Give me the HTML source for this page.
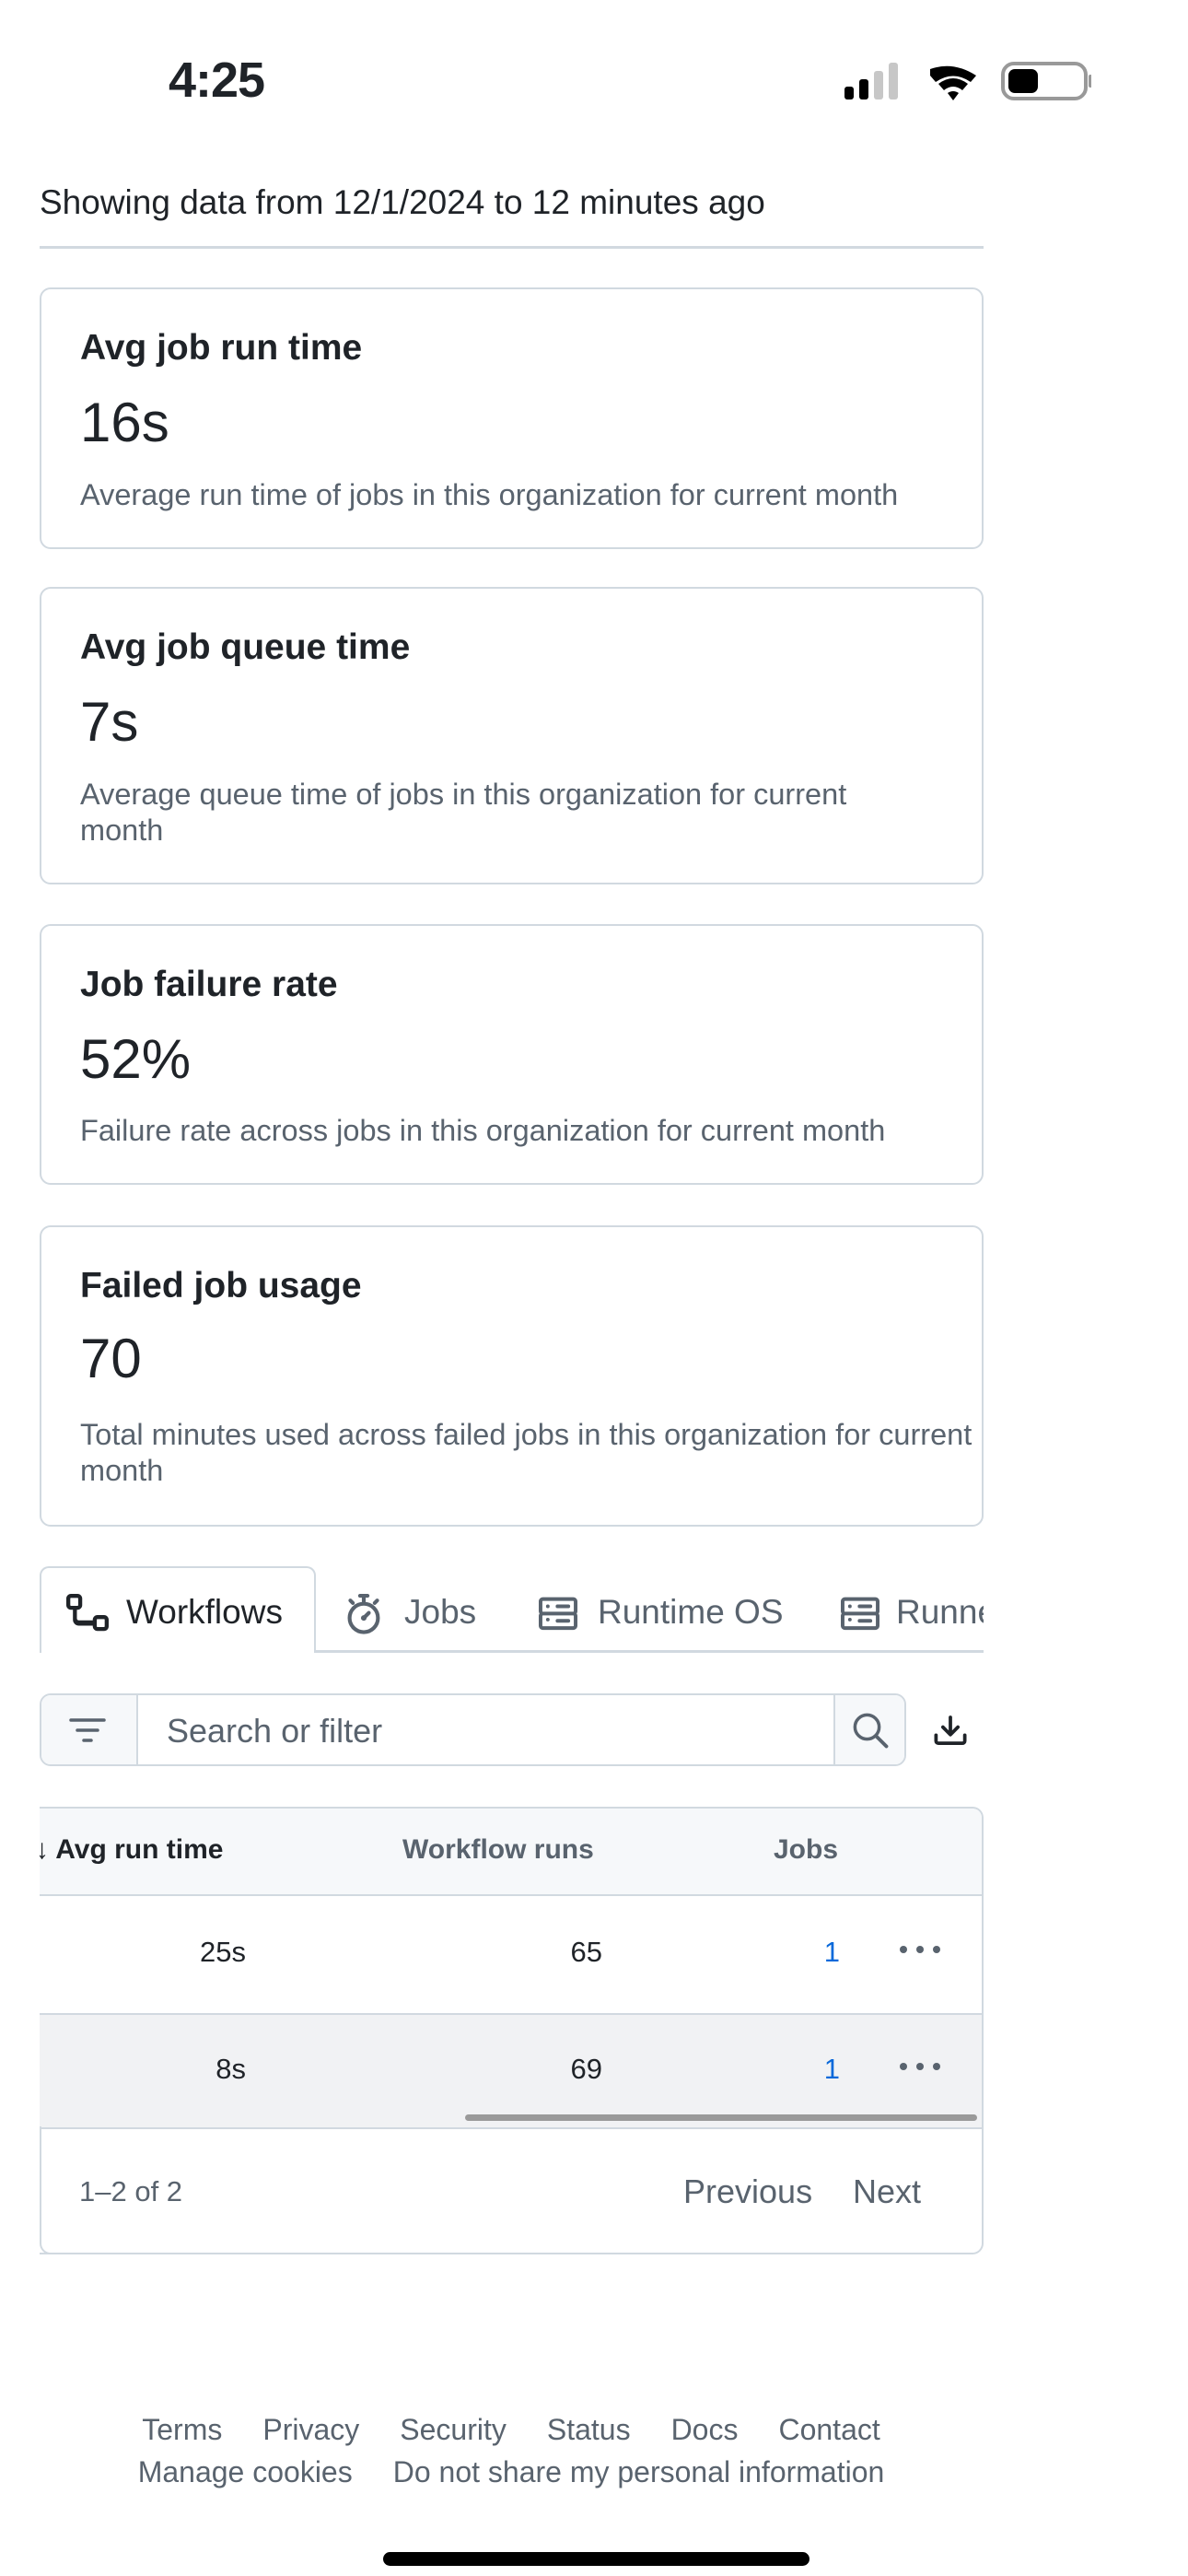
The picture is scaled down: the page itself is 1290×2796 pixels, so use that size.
<!DOCTYPE html>
<html><head><meta charset="utf-8"><style>
*{margin:0;padding:0;box-sizing:border-box}
body{width:1290px;height:2796px;background:#fff;font-family:"Liberation Sans",sans-serif;color:#1f2328;position:relative;overflow:hidden}
.a{position:absolute;white-space:nowrap}
.card{position:absolute;left:43px;width:1025px;border:2px solid #d1d9e0;border-radius:12px}
.t{position:absolute;left:42px;font-size:39px;font-weight:bold}
.v{position:absolute;left:42px;font-size:60px}
.d{position:absolute;left:42px;font-size:32.5px;color:#59636e;line-height:39px;width:970px;white-space:normal}
.g{color:#59636e}
</style></head><body>
<div class="a" style="left:183px;top:56px;font-size:54px;font-weight:bold;letter-spacing:-1px">4:25</div>
<svg class="a" style="left:915px;top:66px" width="270" height="44" viewBox="0 0 270 44">
<rect x="2" y="28" width="10" height="14" rx="3" fill="#000"/>
<rect x="18" y="20" width="10" height="22" rx="3" fill="#000"/>
<rect x="34" y="11" width="10" height="31" rx="3" fill="#c7c7c7"/>
<rect x="50" y="2" width="10" height="40" rx="3" fill="#c7c7c7"/>
<path d="M95 7 Q120 -2 145 14 L139 21 Q120 8 101 21 L95 14 Z" fill="#000" transform="translate(0,2)"/>
<path d="M104 25 Q120 13 136 25 L130 32 Q120 24 110 32 Z" fill="#000"/>
<path d="M114 35 Q120 31 126 35 L120 43 Z" fill="#000"/>
<rect x="174" y="3" width="90" height="38" rx="12" fill="none" stroke="#999" stroke-width="4"/>
<rect x="180" y="9" width="32" height="26" rx="7" fill="#000"/>
<rect x="267" y="15" width="4" height="14" rx="2" fill="#999"/>
</svg>
<div class="a" style="left:43px;top:199px;font-size:37px">Showing data from 12/1/2024 to 12 minutes ago</div>
<div class="a" style="left:43px;top:267px;width:1025px;height:3px;background:#d1d9e0"></div>

<div class="card" style="top:312px;height:284px">
<div class="t" style="top:42px">Avg job run time</div>
<div class="v" style="top:110px">16s</div>
<div class="d" style="top:204px">Average run time of jobs in this organization for current month</div></div>

<div class="card" style="top:637px;height:323px">
<div class="t" style="top:42px">Avg job queue time</div>
<div class="v" style="top:110px">7s</div>
<div class="d" style="top:204px;width:900px">Average queue time of jobs in this organization for current month</div></div>

<div class="card" style="top:1003px;height:283px">
<div class="t" style="top:42px">Job failure rate</div>
<div class="v" style="top:110px">52%</div>
<div class="d" style="top:203px">Failure rate across jobs in this organization for current month</div></div>

<div class="card" style="top:1330px;height:327px">
<div class="t" style="top:42px">Failed job usage</div>
<div class="v" style="top:108px">70</div>
<div class="d" style="top:206px">Total minutes used across failed jobs in this organization for current month</div></div>

<!-- tabs -->
<div class="a" style="left:43px;top:1791px;width:1025px;height:3px;background:#d1d9e0"></div>
<div class="a" style="left:43px;top:1700px;width:300px;height:94px;border:2px solid #d1d9e0;border-bottom:none;border-radius:10px 10px 0 0;background:#fff"></div>
<div class="a" style="left:0;top:1693px;width:1290px;height:110px;overflow:hidden;clip-path:inset(0 222px 0 0)">
<svg class="a" style="left:72px;top:37px" width="46" height="46" viewBox="0 0 16 16"><path d="M1.75 0h2.5C5.2 0 6 .8 6 1.75v2.5C6 5.2 5.2 6 4.25 6H4v3.25c0 .4.3.75.75.75H10v-.25C10 8.8 10.8 8 11.75 8h2.5c1 0 1.75.8 1.75 1.75v2.5c0 1-.8 1.75-1.75 1.75h-2.5C10.8 14 10 13.2 10 12.25V12H4.75A2.25 2.25 0 0 1 2.5 9.750V6h-.75C.8 6 0 5.2 0 4.25v-2.5C0 .8.8 0 1.75 0Zm0 1.5a.25.25 0 0 0-.25.25v2.5c0 .14.11.25.25.25h2.5a.25.25 0 0 0 .25-.25v-2.5a.25.25 0 0 0-.25-.25Zm10 8a.25.25 0 0 0-.25.25v2.5c0 .14.11.25.25.25h2.5a.25.25 0 0 0 .25-.25v-2.5a.25.25 0 0 0-.25-.25Z" fill="#1f2328"/></svg>
<div class="a" style="left:137px;top:36px;font-size:37px">Workflows</div>
<svg class="a" style="left:373px;top:36px" width="44" height="46" viewBox="0 0 16 16"><circle cx="8" cy="9.5" r="5.6" fill="none" stroke="#59636e" stroke-width="1.5"/><path d="M6.5.75h3M8 .75v2.3M12.3 3.6l1 -1M3.7 3.6l-1-1M8 9.5l2-2" stroke="#59636e" stroke-width="1.5" stroke-linecap="round"/><circle cx="8" cy="9.5" r="1.1" fill="#59636e"/></svg>
<div class="a g" style="left:439px;top:36px;font-size:37px">Jobs</div>
<svg class="a" style="left:585px;top:38px" width="42" height="42" viewBox="0 0 16 16"><path d="M1.75 1h12.5c.97 0 1.75.78 1.75 1.75v4c0 .37-.12.72-.32 1 .2.28.32.63.32 1v4c0 .97-.78 1.75-1.75 1.75H1.75C.78 14.5 0 13.72 0 12.75v-4c0-.37.12-.72.32-1A1.7 1.7 0 0 1 0 6.75v-4C0 1.78.78 1 1.75 1ZM1.5 2.75v4c0 .14.11.25.25.25h12.5a.25.25 0 0 0 .25-.25v-4a.25.25 0 0 0-.25-.25H1.75a.25.25 0 0 0-.25.25Zm.25 5.75a.25.25 0 0 0-.25.25v4c0 .14.11.25.25.25h12.5a.25.25 0 0 0 .25-.25v-4a.25.25 0 0 0-.25-.25ZM7 4.75A.75.75 0 0 1 7.75 4h4.5a.75.75 0 0 1 0 1.5h-4.5A.75.75 0 0 1 7 4.75Zm.75 5.25h4.5a.75.75 0 0 1 0 1.5h-4.5a.75.75 0 0 1 0-1.5ZM3 4.75a.75.75 0 1 1 1.5 0 .75.75 0 0 1-1.5 0Zm0 5.5a.75.75 0 1 1 1.5 0 .75.75 0 0 1-1.5 0Z" fill="#59636e"/></svg>
<div class="a g" style="left:649px;top:36px;font-size:37px">Runtime OS</div>
<svg class="a" style="left:913px;top:38px" width="42" height="42" viewBox="0 0 16 16"><path d="M1.75 1h12.5c.97 0 1.75.78 1.75 1.75v4c0 .37-.12.72-.32 1 .2.28.32.63.32 1v4c0 .97-.78 1.75-1.75 1.75H1.75C.78 14.5 0 13.72 0 12.75v-4c0-.37.12-.72.32-1A1.7 1.7 0 0 1 0 6.75v-4C0 1.78.78 1 1.75 1ZM1.5 2.75v4c0 .14.11.25.25.25h12.5a.25.25 0 0 0 .25-.25v-4a.25.25 0 0 0-.25-.25H1.75a.25.25 0 0 0-.25.25Zm.25 5.75a.25.25 0 0 0-.25.25v4c0 .14.11.25.25.25h12.5a.25.25 0 0 0 .25-.25v-4a.25.25 0 0 0-.25-.25ZM7 4.75A.75.75 0 0 1 7.75 4h4.5a.75.75 0 0 1 0 1.5h-4.5A.75.75 0 0 1 7 4.75Zm.75 5.25h4.5a.75.75 0 0 1 0 1.5h-4.5a.75.75 0 0 1 0-1.5ZM3 4.75a.75.75 0 1 1 1.5 0 .75.75 0 0 1-1.5 0Zm0 5.5a.75.75 0 1 1 1.5 0 .75.75 0 0 1-1.5 0Z" fill="#59636e"/></svg>
<div class="a g" style="left:973px;top:36px;font-size:37px">Runners</div>
</div>

<!-- search -->
<div class="a" style="left:43px;top:1838px;width:941px;height:79px;border:2px solid #d1d9e0;border-radius:12px;overflow:hidden">
<div class="a" style="left:0;top:0;width:105px;height:75px;background:#f6f8fa;border-right:2px solid #d1d9e0"></div>
<div class="a" style="left:860px;top:0;width:79px;height:75px;background:#f6f8fa;border-left:2px solid #d1d9e0"></div>
</div>
<svg class="a" style="left:74px;top:1859px" width="42" height="38" viewBox="0 0 42 38"><path d="M3 8h36M10 19h22M17 30h8" stroke="#59636e" stroke-width="3.5" stroke-linecap="round"/></svg>
<div class="a g" style="left:181px;top:1858px;font-size:36px">Search or filter</div>
<svg class="a" style="left:924px;top:1857px" width="42" height="42" viewBox="0 0 24 24"><circle cx="10" cy="10" r="7.5" fill="none" stroke="#59636e" stroke-width="2"/><path d="M15.5 15.5 22 22" stroke="#59636e" stroke-width="2.2" stroke-linecap="round"/></svg>
<svg class="a" style="left:1012px;top:1859px" width="40" height="40" viewBox="0 0 16 16"><path d="M2.75 14A1.75 1.75 0 0 1 1 12.25v-2.5a.75.75 0 0 1 1.5 0v2.5c0 .138.112.25.25.25h10.5a.25.25 0 0 0 .25-.25v-2.5a.75.75 0 0 1 1.5 0v2.5A1.75 1.75 0 0 1 13.25 14Z M7.25 7.689V2a.75.75 0 0 1 1.5 0v5.689l1.97-1.969a.749.749 0 1 1 1.06 1.06l-3.25 3.25a.749.749 0 0 1-1.06 0L4.22 6.78a.749.749 0 1 1 1.06-1.06l1.97 1.969Z" fill="#1f2328"/></svg>

<!-- table -->
<div class="a" style="left:43px;top:1961px;width:1025px;height:486px;border:2px solid #d1d9e0;border-left:none;border-radius:0 12px 12px 0;overflow:hidden">
<div class="a" style="left:0;top:0;width:1040px;height:95px;background:#f6f8fa;border-bottom:2px solid #d1d9e0"></div>
<div class="a" style="left:0;top:222px;width:1040px;height:2px;background:#d1d9e0"></div>
<div class="a" style="left:0;top:224px;width:1040px;height:124px;background:#f1f2f4;border-bottom:2px solid #d1d9e0"></div>
<div class="a" style="left:462px;top:332px;width:556px;height:7px;border-radius:4px;background:#9a9a9a"></div>
</div>
<div class="a" style="left:43px;top:2308px;width:30px;height:139px;border-left:2px solid #d1d9e0;border-bottom:2px solid #d1d9e0;border-radius:0 0 0 12px"></div>

<div class="a" style="left:38px;top:1991px;font-size:30px;font-weight:bold;clip-path:inset(0 0 0 5px)">↓ Avg run time</div>
<div class="a g" style="left:437px;top:1991px;font-size:30px;font-weight:bold">Workflow runs</div>
<div class="a g" style="left:840px;top:1991px;font-size:30px;font-weight:bold">Jobs</div>
<div class="a" style="right:1023px;top:2101px;font-size:31px">25s</div>
<div class="a" style="right:636px;top:2101px;font-size:31px">65</div>
<div class="a" style="right:378px;top:2101px;font-size:31px;color:#0969da">1</div>
<svg class="a" style="left:976px;top:2110px" width="46" height="12"><circle cx="5" cy="6" r="4" fill="#59636e"/><circle cx="23" cy="6" r="4" fill="#59636e"/><circle cx="41" cy="6" r="4" fill="#59636e"/></svg>
<div class="a" style="right:1023px;top:2228px;font-size:31px">8s</div>
<div class="a" style="right:636px;top:2228px;font-size:31px">69</div>
<div class="a" style="right:378px;top:2228px;font-size:31px;color:#0969da">1</div>
<svg class="a" style="left:976px;top:2237px" width="46" height="12"><circle cx="5" cy="6" r="4" fill="#59636e"/><circle cx="23" cy="6" r="4" fill="#59636e"/><circle cx="41" cy="6" r="4" fill="#59636e"/></svg>
<div class="a g" style="left:86px;top:2361px;font-size:31px">1–2 of 2</div>
<div class="a g" style="left:742px;top:2358px;font-size:36px">Previous</div>
<div class="a g" style="left:926px;top:2358px;font-size:36px">Next</div>

<div class="a g" style="left:0;width:1110px;text-align:center;top:2619px;font-size:32px">Terms<span style="margin-left:44px">Privacy</span><span style="margin-left:44px">Security</span><span style="margin-left:44px">Status</span><span style="margin-left:44px">Docs</span><span style="margin-left:44px">Contact</span></div>
<div class="a g" style="left:0;width:1110px;text-align:center;top:2665px;font-size:32px">Manage cookies<span style="margin-left:44px">Do not share my personal information</span></div>
<div class="a" style="left:416px;top:2770px;width:463px;height:15px;border-radius:8px;background:#000"></div>
</body></html>
